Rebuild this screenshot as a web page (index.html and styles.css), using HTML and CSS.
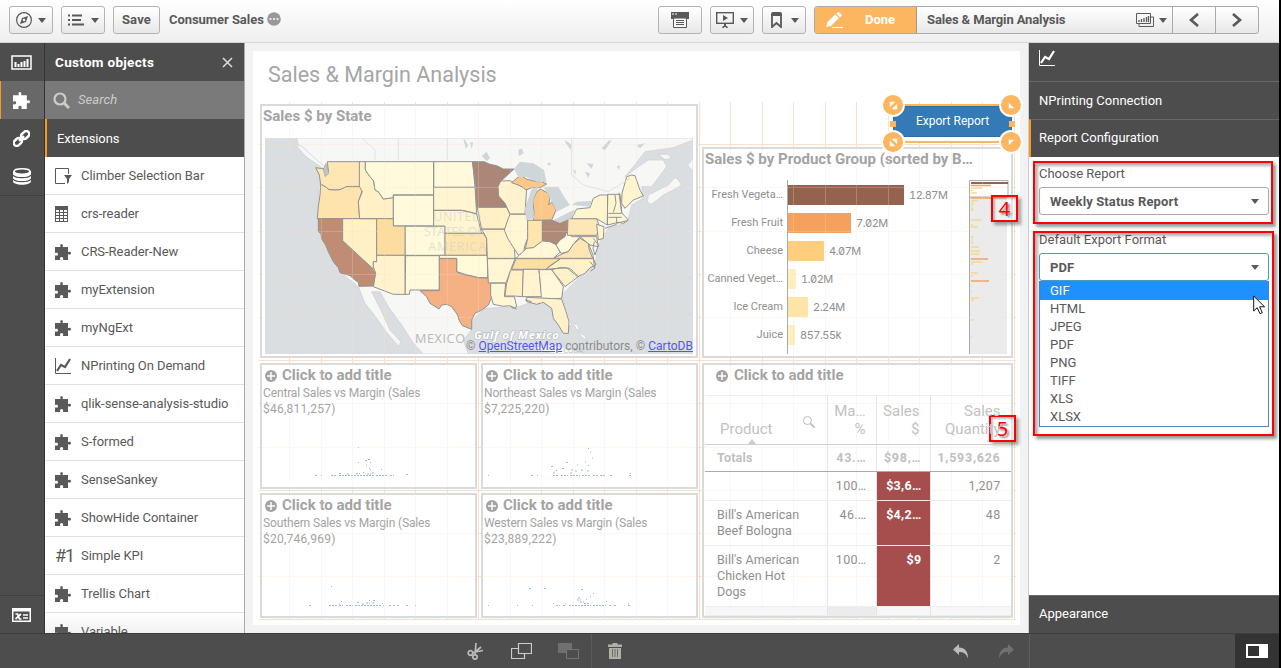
FILE: index.html
```html
<!DOCTYPE html>
<html lang="en">
<head>
<meta charset="utf-8">
<title>Consumer Sales</title>
<link rel="stylesheet" href="styles.css">
</head>
<body>
<svg class="defs" width="0" height="0" aria-hidden="true">
  <symbol id="puzzle" viewBox="0 0 16 16"><path d="M0 3h5c.8 0 .5-.6.3-1C5 1 5.500 0 6.500 0S8 1 7.800 2c-.2.400-.3 1 .4 1H13v4.500c0 .8.600.6 1 .4 1-.4 2 .2 2 1.300s-1 1.800-2 1.300c-.4-.2-1-.4-1 .4V16H8.500c-.8 0-.6-.6-.4-1 .4-1-.3-2-1.500-2s-1.900 1-1.500 2c.2.400.3 1-.5 1H0v-4c0-.8.600-.6 1-.4 1 .4 2-.2 2-1.400S2 8.300 1 8.800c-.4.200-1 .4-1-.4z"/></symbol>
  <symbol id="plus" viewBox="0 0 12 12"><circle cx="6" cy="6" r="6"/><path d="M6 2v8M2 6h8" stroke="#fff" stroke-width="1.500"/></symbol>
  <symbol id="line" viewBox="0 0 16 16"><path d="M.5 0v15.500H16" fill="none" stroke="currentColor"/><path d="M2 13l4-6 4 2 5-8" fill="none" stroke="currentColor" stroke-width="2.200"/></symbol>
</svg>
<header class="topbar">
  <button class="btn compass"><svg width="16" height="16" viewBox="0 0 16 16"><circle cx="8" cy="8" r="7.400" fill="none" stroke="#595959" stroke-width="1.200"/><path d="M12 4l-2 6-6 2 2-6z" fill="#595959"/><circle cx="8" cy="8" r="1.300" fill="#f5f5f5"/></svg><i class="caret"></i></button>
  <button class="btn"><svg width="17" height="12" viewBox="0 0 17 12"><path d="M0 1.500h2M0 6h2M0 10.500h2M4 1.500h10M4 6h9M4 10.500h12" stroke="#595959" stroke-width="2"/></svg><i class="caret"></i></button>
  <button class="btn save">Save</button>
  <span class="appname">Consumer Sales</span>
  <svg class="more" width="14" height="14" viewBox="0 0 14 14"><circle cx="7" cy="7" r="6.800" fill="#999"/><path d="M2.500 7h2M6 7h2M9.500 7h2" stroke="#fff" stroke-width="1.300"/></svg>
  <div class="spacer"></div>
  <button class="btn snap"><svg width="18" height="16" viewBox="0 0 18 16"><path d="M0 0h18v7H0z" fill="#595959"/><path d="M1 2h2M4 2h2" stroke="#fff"/><path d="M2.500 6v9.500h13V6z" fill="#f8f8f8" stroke="#595959"/><path d="M5 8.500h8M5 10.500h8M5 12.500h8" stroke="#595959"/></svg></button>
  <button class="btn"><svg width="18" height="16" viewBox="0 0 18 16"><rect x=".7" y=".7" width="16.600" height="10.600" fill="none" stroke="#595959" stroke-width="1.400"/><path d="M7 3l5 3-5 3zM6 16l1-2h1v-3h2v3h1l1 2h-2v-1H8v1z" fill="#595959"/></svg><i class="caret"></i></button>
  <button class="btn mark"><svg width="11" height="16" viewBox="0 0 11 16"><path d="M1 2v13l4.500-4 4.500 4V2" fill="none" stroke="#595959" stroke-width="1.800"/><path d="M0 4V2q0-2 2-2h7q2 0 2 2v2z" fill="#595959"/></svg><i class="caret"></i></button>
  <div class="sheetnav">
    <button class="done"><svg width="17" height="16" viewBox="0 0 17 16"><path d="M0 15l1.500-5L9 2.500 13 6l-8 8zM10 1.500Q11.500 0 13 0l3 3q0 1-2 2.300z" fill="#fff"/><path d="M6 15.500h11" stroke="#fff"/></svg><span>Done</span></button>
    <div class="sheetname"><span>Sales &amp; Margin Analysis</span><svg width="18" height="14" viewBox="0 0 18 14"><path d="M3 11v2.500h14.500V4H15M.5.5h14v10H.5z" fill="none" stroke="#595959"/><path d="M3 9V7M5.500 9V6M8 9V5M10.500 9V4M12.500 9V3" stroke="#595959" stroke-width="1.300"/></svg><i class="caret"></i></div>
    <button class="arrow"><svg width="10" height="14" viewBox="0 0 10 14"><path d="M9 1L2 7l7 6" fill="none" stroke="#595959" stroke-width="2.700"/></svg></button>
    <button class="arrow"><svg width="10" height="14" viewBox="0 0 10 14"><path d="M1 1l7 6-7 6" fill="none" stroke="#595959" stroke-width="2.700"/></svg></button>
  </div>
</header>
<main class="workspace">
  <nav class="rail">
    <div class="tab"><svg width="21" height="15" viewBox="0 0 21 15"><path d="M1 1h19v13H1z" fill="none" stroke="#fff" stroke-width="1.500"/><path d="M4.500 12V7M7.500 12V9M10.500 12V7M13.500 12V6M16.500 12V4" stroke="#fff" stroke-width="2"/></svg></div>
    <div class="tab active"><svg width="17" height="17" fill="#fff"><use href="#puzzle"/></svg></div>
    <div class="tab"><svg width="17" height="17" viewBox="0 0 17 17"><g transform="rotate(-43 8.500 8.500)" fill="none" stroke="#fff" stroke-width="2.500"><rect x="-1" y="5.500" width="9" height="6" rx="3"/><rect x="9" y="5.500" width="9" height="6" rx="3"/><path d="M5 8.500h7"/></g></svg></div>
    <div class="tab"><svg width="18" height="17" viewBox="0 0 18 17"><path d="M0 3v10c0 5 18 5 18 0V3" fill="#fff"/><ellipse cx="9" cy="3.500" rx="8" ry="2.700" fill="#4d4d4d" stroke="#fff" stroke-width="1.500"/><path d="M0 7c2 3.500 16 3.500 18 0M0 11c2 3.500 16 3.500 18 0" fill="none" stroke="#4d4d4d" stroke-width="1.300"/></svg></div>
    <div class="tab vars"><svg width="19" height="14" viewBox="0 0 19 14"><path d="M0 0h19v14H0z" fill="#fff"/><path d="M1.500 3.500h16v9h-16z" fill="#4d4d4d"/><path d="M11 7h5M11 10h5" stroke="#fff" stroke-width="1.500"/><path d="M3.500 6h2l2 5h2M9 6L3.500 11" stroke="#fff" stroke-width="1.700" fill="none"/></svg></div>
  </nav>
  <aside class="objects">
    <div class="objhead"><b>Custom objects</b><svg width="11" height="11" viewBox="0 0 11 11"><path d="M1 1l9 9M10 1l-9 9" stroke="#ddd" stroke-width="1.500"/></svg></div>
    <div class="search"><svg width="17" height="17" viewBox="0 0 17 17"><circle cx="7" cy="7" r="5.500" fill="none" stroke="#ccc" stroke-width="2.200"/><path d="M11 11l5 5" stroke="#ccc" stroke-width="3"/></svg><i>Search</i></div>
    <div class="exthead">Extensions</div>
    <ul class="extlist">
      <li><svg width="17" height="16" viewBox="0 0 17 16"><path d="M10 15.500H.5V.5h13V6" fill="none" stroke="#595959"/><path d="M9 7h8l-3 4v3l-2 2v-5z" fill="#595959"/></svg>Climber Selection Bar</li>
      <li><svg width="17" height="16" viewBox="0 0 17 16"><path d="M0 0h13v16H0z" fill="#595959"/><path d="M1 5H4M5 5h3M9 5h3M1 8H4M5 8h3M9 8h3M1 11H4M5 11h3M9 11h3M1 14H4M5 14h3M9 14h3" stroke="#fff" stroke-width="2"/></svg>crs-reader</li>
      <li><svg class="pz"><use href="#puzzle"/></svg>CRS-Reader-New</li>
      <li><svg class="pz"><use href="#puzzle"/></svg>myExtension</li>
      <li><svg class="pz"><use href="#puzzle"/></svg>myNgExt</li>
      <li><svg class="pz"><use href="#line"/></svg>NPrinting On Demand</li>
      <li><svg class="pz"><use href="#puzzle"/></svg>qlik-sense-analysis-studio</li>
      <li><svg class="pz"><use href="#puzzle"/></svg>S-formed</li>
      <li><svg class="pz"><use href="#puzzle"/></svg>SenseSankey</li>
      <li><svg class="pz"><use href="#puzzle"/></svg>ShowHide Container</li>
      <li><span class="kpi">#1</span>Simple KPI</li>
      <li><svg class="pz"><use href="#puzzle"/></svg>Trellis Chart</li>
      <li><svg class="pz"><use href="#puzzle"/></svg>Variable</li>
    </ul>
  </aside>
  <section class="stage">
    <div class="sheet">
      <h1>Sales &amp; Margin Analysis</h1>
      <div class="board">
        <article class="widget mapw">
          <h2>Sales $ by State</h2>
          <div class="mapbox">
          <svg class="map" width="428" height="216" viewBox="30 129 1284 648">
            <rect x="30" y="129" width="1284" height="648" fill="#dadee1"/>
            <path class="land" d="M125 129L130 150 150 163 183 200 205 225 192 275 187 365 193 410 230 490 260 535 310 575 330 625 362 665 393 710 432 755 437 740 405 705 380 650 350 590 375 590 400 635 440 690 475 745 505 777H640L625 735 650 705 652 675 690 640 790 635 850 615 905 635 925 700 950 690 920 600 970 550 1020 510 1030 450 1060 400 1110 385 1120 370 1130 330 1165 310 1160 275 1190 275 1235 215 1225 195 1180 195 1150 215 1110 245 1135 215 1170 170 1255 158 1314 135V129z"/>
            <path class="land" d="M1180 300L1210 285 1240 270 1260 248 1268 252 1280 270 1255 285 1225 300 1190 328 1177 322zM1210 178l30 0 10 12-20 4zM1298 210l16-20v40zM120 148l20 6 50 45 24 18-6 6-55-38z"/>
            <path class="land" d="M955 685l12 4 6 14-8 2zM972 710l20 15 2 10-14-8zM830 760l50-12 60 12 50 17H900z"/>
            <g class="states">
              <path fill="#ffe7b5" d="M217 200H315V274L275 275 255 284 240 285 222 284 215 278 205 272 197 268 193 240 182 218 207 222 212 240 220 228z"/>
              <path fill="#fee3ad" d="M197 268L205 272 215 278 222 284 240 285 255 284 275 275H315L322 285 310 320 314 371H187L190 335 195 300z"/>
              <path fill="#c08c74" d="M190 371H263V437L360 530 362 540 357 573 312 574 310 562 300 555 285 542 255 533 250 518 235 500 220 470 212 450 200 432 198 415 190 410z"/>
              <path fill="#fff0c6" d="M263 371H365V500L355 500V522L263 437zM313 200H331V225L345 245 356 258 360 285 370 290 385 312 415 308V371H314L310 320 322 290 313 274z"/>
              <path fill="#fffadb" d="M331 200H536V300H415V308L385 312 370 290 360 285 356 258 345 245 331 225zM536 200H653L660 277H536zM415 300H536V393H415zM450 393H570V481H450zM452 482H553V585H465L463 598H450z"/>
              <path fill="#fff6d1" d="M536 277H660L665 357 640 350 620 346H536zM536 346H620L640 350 665 357 680 415H570V393H536z"/>
              <path fill="#fddc9f" d="M365 371H415V393H450V481H365z"/>
              <path fill="#fff2cc" d="M365 481H450V598H415L355 575 362 535 355 515V500H365z"/>
              <path fill="#fee5b0" d="M570 415H685L695 430V481H570z"/>
              <path fill="#fffad7" d="M553 481H697L698 548 670 548 645 542 605 530V490H553z"/>
              <path fill="#f5b184" d="M553 491H605V530L620 538 645 542 670 548 706 550 713 600 700 630 690 638 675 648 660 655 650 675 650 703 622 692 612 675 608 660 590 635 575 628 560 630 552 642 525 625 515 605 495 587H553z"/>
            </g>
            <g class="states" transform="translate(645 0)">
              <path fill="#ac8777" d="M7 200H42L60 208 80 212 100 222 132 222 102 250 92 258 84 275 88 300 109 325 110 337H20L17 270z"/>
              <path fill="#fff0c6" d="M22 337H110L125 370 115 385 105 402H35L30 380z"/>
              <path fill="#fff2ce" d="M92 258L120 257 145 270 170 280 165 357H120L105 325 86 303 84 275z"/>
              <path fill="#fbc889" d="M125 263L140 250 155 240 168 252 200 260 215 260 230 267 210 278 185 278 168 285 160 278 145 270zM190 376L192 350 188 318 200 290 212 282 235 295 240 310 236 330 246 320 258 345 245 375z"/>
              <path fill="#fff1c8" d="M35 403H105L115 430 133 455 135 490H52L50 430z"/>
              <path fill="#fff7d3" d="M115 370L120 358H168L173 376V430L165 450 160 475 145 480 135 465 113 430 103 405zM52 491H135L122 525 108 564H55zM62 564H107L103 605H133L140 635 130 640 118 632 100 634 70 628 62 600z"/>
              <path fill="#fee5ae" d="M173 376H217V440L190 458 166 462 173 430z"/>
              <path fill="#b08a79" d="M217 376H245L270 380 292 372V405L285 425 270 435 260 450 240 440 217 437z"/>
              <path fill="#fff7d6" d="M140 488L150 478 170 460 190 458 217 438 240 440 260 450 270 472 250 490H135z"/>
              <path fill="#fddfa1" d="M138 491H272L240 512 227 523H125z"/>
              <path fill="#fff0c6" d="M122 525H160L157 605 133 603H105L110 565z"/>
              <path fill="#fff4cf" d="M160 523H207L215 605H157z"/>
              <path fill="#fff9d9" d="M207 524H245L280 575 275 610 215 612z"/>
              <path fill="#fff1ca" d="M245 524L270 518 300 520 325 545 305 560 285 575zM272 491H370L378 510 360 518 345 535 323 545 290 518 227 523zM170 607L275 612 288 650 297 680 295 715 280 715 265 690 250 670 245 640 220 622 200 628 170 620z"/>
              <path fill="#fff9dd" d="M258 450L270 435 285 425 292 405 305 425 330 425 310 448 295 470 273 475z"/>
              <path fill="#fee5b4" d="M250 490L285 473 295 470 310 448 330 430 355 445 358 465 368 490z"/>
              <path fill="#fee7b6" d="M294 371H380L390 400 380 421H292z"/>
              <path fill="#fff6d0" d="M305 371L320 342 360 338 370 310 390 300H413L412 390 380 371zM380 388L402 395 400 430 385 435zM413 298H450L455 353 475 375 460 385 445 382 412 390zM455 325L456 295 470 245 485 240 495 242 510 285 520 303 490 315 465 340zM330 425H380L385 455 360 450z"/>
              <path fill="none" d="M415 355H455M415 367H455M435 300L438 325 430 352M447 293L455 353M440 367V385"/>
              <path fill="none" d="M357 450l12 30 5 40-12 8M370 430l15 20-10 30-6-20 4-20M440 385l30-8M405 400l35-12M360 500l15 18M120 632l20 10M165 615l20 5"/>
            </g>
            <g fill="#cfd6d9" transform="translate(645 0)">
              <path d="M132 222L150 200 190 205 222 225 230 262 200 260 165 245 145 247zM168 375L165 340 185 282 205 275 188 320 192 370zM220 275L265 275 285 310 300 330 260 350 248 325 235 300zM250 376L300 350 320 342 305 368 270 384zM305 330L320 320 365 318 360 335z"/>
              <path d="M35 183l15-13 10 20-10 8zM145 165l10-5 6 15-15 8zM285 135l20 15-3 14-15-20zM350 205l20 2-5 15zM345 230l15 5-5 14zM395 160l20-22 10-2-20 30zM230 205l12-2-3 10zM310 225l8 2-2 14zM-20 130l15 20-8 12zM0 140l9 4-4 18zM500 150l25-5-15 15zM440 215l10-5-2 14z"/>
            </g>
            <path d="M205 222L213 205 222 235 210 245z" fill="#bfc6c9" stroke="#777"/>
            <path d="M320 129L360 165V196M430 129V196M577 129V196M950 129V240L985 270 1060 290M1060 290L1125 250" fill="none" stroke="#e2e2e2" stroke-width="3"/>
            <g fill="#c7cccd" class="country" font-size="37"><text x="535" y="377" textLength="143">UNITED</text><text x="507" y="423" textLength="178">STATES OF</text><text x="520" y="467" textLength="173">AMERICA</text></g>
            <g class="places"><text x="480" y="743" font-size="38" textLength="150" fill="#b4b8ba">MEXICO</text><text x="657" y="733" class="gulf" textLength="255">Gulf of Mexico</text><text x="925" y="775" font-size="22" fill="#bbb">CUBA</text></g>
          </svg>
          <div class="credit">© <u>OpenStreetMap</u> contributors, © <u>CartoDB</u></div>
          </div>
        </article>
        <div class="rightcol">
          <div class="exportslot"><div class="selected"><button class="export">Export Report</button>
            <span class="handle tl"><svg viewBox="0 0 12 12"><path d="M2 2h6L2 8zM10 4v6H4z"/></svg></span><span class="handle tr"><svg viewBox="0 0 12 12"><path d="M3 3v6h6z"/></svg></span><span class="handle bl"><svg viewBox="0 0 12 12"><path d="M4 2h6v6zM2 4v6h6z"/></svg></span><span class="handle br"><svg viewBox="0 0 12 12"><path d="M3 3h6L3 9z"/></svg></span><i class="knob l"></i><i class="knob r"></i></div></div>
          <article class="widget barw">
            <h2>Sales $ by Product Group (sorted by B…</h2>
            <div class="bars">
              <div class="barrows">
                <div class="bar"><span>Fresh Vegeta…</span><i style="width:116px;background:#94634f"></i><b>12.87M</b></div>
                <div class="bar"><span>Fresh Fruit</span><i style="width:63px;background:#f4a15d"></i><b>7.02M</b></div>
                <div class="bar"><span>Cheese</span><i style="width:36px;background:#fecd7d"></i><b>4.07M</b></div>
                <div class="bar"><span>Canned Veget…</span><i style="width:8px;background:#fff0bd"></i><b>1.02M</b></div>
                <div class="bar"><span>Ice Cream</span><i style="width:20px;background:#fee5a5"></i><b>2.24M</b></div>
                <div class="bar"><span>Juice</span><i style="width:7px;background:#ffefbf"></i><b>857.55k</b></div>
              </div>
              <svg class="mini" width="40" height="174" viewBox="0 0 40 174"><path d="M0 17h38v157H0z" fill="#ebebeb"/><path d="M.5 174V.5h38.500V17H1" fill="none" stroke="#aaa"/><path d="M2 3h37" stroke="#94634f" stroke-width="2"/><path d="M2 5.500h20M2 18h35M2 79h17M2 101h18" stroke="#efa468" stroke-width="1.500"/><path d="M2 8h11M2 10.500h2M2 13h6M2 20.500h7M2 23h3M2 25h2M2 28h2M2 30h3M2 40h10M2 45h2M2 47h7M2 57h3M2 60h2M2 63h2M2 67h8M2 71h9M2 74h8M2 82h11M2 84h2M2 93h7M2 96h2M2 106h1M2 111h1M2 118h8M2 120h3M2 140h3M2 157h1" stroke="#f4d88e" stroke-width="1.500"/></svg>
            </div>
          </article>
        </div>
        <article class="widget sc"><h2><svg class="plus"><use href="#plus"/></svg>Click to add title</h2><p>Central Sales vs Margin (Sales<br><span>$46,811,257)</span></p><svg class="dots" viewBox="260 440 213 45"><path d="M313 473.500h3M319 473.500h1M329 473.500h6M337 473.500h35M374 473.500h12M388 473.500h4M337 471.500h3M345 472h2M354 471.500h4M361 470.500h1M365 472h4M370 471h2M356 460.500h1M356 445.500h1M363 458.500h2M366 457.500h2M368 460.500h1M364 463h1M367 466.500h1M368 468h1M379 467.500h1M404 472.500h2"/></svg></article>
        <article class="widget sc"><h2><svg class="plus"><use href="#plus"/></svg>Click to add title</h2><p>Northeast Sales vs Margin (Sales<br><span>$7,225,220)</span></p><svg class="dots" viewBox="481 440 213 45"><path d="M486 473.500h1M529 473.500h2M535 473.500h1M551 473.500h6M559 473.500h7M568 473.500h10M580 473.500h8M591 473.500h5M598 473.500h5M608 473.500h3M627 473.500h2M628 471.500h1M549 464.500h2M554 468.500h1M560 466.500h3M564 460.500h2M569 468h3M573 469h2M575 463h1M579 468h2M583 460h1M586 463.500h1M590 456h1M588 450h1M586 446.500h1M585 469h2M551 471h2M568 471h2"/></svg></article>
        <article class="widget tablew"><h2><svg class="plus"><use href="#plus"/></svg>Click to add title</h2>
          <table>
            <colgroup><col class="c1"><col class="c2"><col class="c3"><col class="c4"></colgroup>
            <tr class="th"><th>Product<svg class="lens" width="12" height="12" viewBox="0 0 12 12"><circle cx="4.500" cy="4.500" r="4" fill="none" stroke="#bbb"/><path d="M7.500 7.500L12 12" stroke="#bbb" stroke-width="1.700"/></svg><i class="sort"></i></th><th>Ma…<br>%</th><th>Sales<br>$</th><th>Sales<br>Quantity</th></tr>
            <tr class="totals"><td>Totals</td><td>43.…</td><td>$98,…</td><td>1,593,626</td></tr>
            <tr class="r1"><td></td><td>100…</td><td>$3,6…</td><td>1,207</td></tr>
            <tr class="r2"><td>Bill's American<br>Beef Bologna</td><td>46.…</td><td>$4,2…</td><td>48</td></tr>
            <tr class="r3"><td>Bill's American<br>Chicken Hot<br>Dogs</td><td>100…</td><td>$9</td><td>2</td></tr>
            <tr class="r4"><td></td><td></td><td></td><td></td></tr>
          </table>
        </article>
        <article class="widget sc"><h2><svg class="plus"><use href="#plus"/></svg>Click to add title</h2><p>Southern Sales vs Margin (Sales<br><span>$20,746,969)</span></p><svg class="dots" viewBox="260 570 213 45"><path d="M307 603.500h3M327 603.500h8M337 603.500h4M344 603.500h7M353 603.500h26M381 603.500h1M387 603.500h3M391 603.500h2M395 603.500h2M404 603.500h2M413 603.500h1M329 584.500h1M339 599.500h1M337 602h1M355 600.500h2M360 602h2M364 601h4M367 598.500h1M371 598.500h2M370 601h2M380 601.500h1"/></svg></article>
        <article class="widget sc"><h2><svg class="plus"><use href="#plus"/></svg>Click to add title</h2><p>Western Sales vs Margin (Sales<br><span>$23,889,222)</span></p><svg class="dots" viewBox="481 570 213 45"><path d="M486 603.500h1M515 603.500h1M530 603.500h1M554 603.500h4M561 603.500h3M567 603.500h22M591 603.500h8M600 603.500h4M607 603.500h2M612 603.500h2M626 603.500h2M551 601.500h1M527 586.500h2M542 586.500h2M579 587.500h2M591 591.500h1M588 594.500h1M576 596h2M575 598h4M584 597h1M578 600h4M582 601.500h6M604 599.500h1M626 602h1M563 602h1"/></svg></article>
      </div>
    </div>
  </section>
  <aside class="props">
    <div class="phead"><svg class="pz"><use href="#line"/></svg></div>
    <div class="phead">NPrinting Connection</div>
    <div class="phead open">Report Configuration</div>
    <div class="pbody">
      <label>Choose Report</label>
      <div class="select">Weekly Status Report<i class="caret"></i></div>
      <label class="second">Default Export Format</label>
      <div class="select focus">PDF<i class="caret"></i></div>
      <ul class="options"><li class="hot">GIF</li><li>HTML</li><li>JPEG</li><li>PDF</li><li>PNG</li><li>TIFF</li><li>XLS</li><li>XLSX</li></ul>
    </div>
    <div class="phead appearance">Appearance</div>
  </aside>
</main>
<footer class="bottombar">
  <div class="tools">
    <svg width="17" height="17" viewBox="0 0 17 17"><g fill="none" stroke="#bbb" stroke-width="1.700"><circle cx="3.500" cy="10" r="2.300"/><circle cx="8" cy="14" r="2.200"/><path d="M5.500 9.500L16 7.500M8 12L9 0M8 9l6-5"/></g></svg>
    <svg width="21" height="16" viewBox="0 0 21 16"><path d="M7.500.5h13v10h-13zM7.500 5.500h-7v10h13v-5" fill="none" stroke="#ccc" stroke-width="1.200"/></svg>
    <svg width="21" height="16" viewBox="0 0 21 16"><path d="M0 0h14v10H0z" fill="#707070"/><path d="M8.500 6.500h12v9h-12z" fill="#4d4d4d" stroke="#757575"/></svg>
    <i class="divider"></i>
    <svg width="14" height="16" viewBox="0 0 14 16"><path d="M0 1.500h4L5 0h4l1 1.500h4V4H0zM1 5h12v11H1z" fill="#b0b0a8"/><path d="M4.500 6v8M7 6v8M9.500 6v8" stroke="#6c6c66"/></svg>
  </div>
  <div class="history">
    <svg width="16" height="15" viewBox="0 0 16 15"><path d="M0 5.500L6 0v3.500c6 0 9 4 9 11C13 9 10 8 6 8v3z" fill="#bbb"/></svg>
    <svg width="16" height="15" viewBox="0 0 16 15"><path d="M16 5.500L10 0v3.500c-6 0-9 4-9 11C3 9 6 8 10 8v3z" fill="#707070"/></svg>
  </div>
  <div class="toggle"><span><svg width="22" height="14" viewBox="0 0 22 14"><path d="M0 0h22v14H0z" fill="#fff"/><path d="M2 2h11v10H2z" fill="#333"/></svg></span></div>
</footer>
<div class="edge"></div>
<div class="callout first"></div>
<div class="callout second"></div>
<div class="num four">4</div>
<div class="num five">5</div>
<svg class="pointer" width="13" height="20" viewBox="0 0 13 20"><path d="M.7 1v15l3.500-3.300 2.800 6 2.300-1-2.700-5.900h5z" fill="#fff" stroke="#111"/></svg>
</body>
</html>
```
FILE: styles.css
```css
* { box-sizing: border-box; }
body { margin: 0; width: 1281px; height: 668px; overflow: hidden; position: relative; font: 13px/16px Roboto, "Liberation Sans", sans-serif; color: #595959; background: #f2f2f2; }
.defs { position: absolute; }
h1, h2, p, ul { margin: 0; padding: 0; }
ul { list-style: none; }
svg { display: block; flex: none; }
button { font: inherit; color: inherit; margin: 0; padding: 0; border: 0; background: none; }

.topbar { height: 43px; width: 1279px; display: flex; align-items: flex-start; padding: 6px 20px 0 9px; background: linear-gradient(#fff, #efefef); border-bottom: 1px solid #d6d6d6; }
.btn { height: 28px; width: 44px; margin-right: 8px; display: flex; align-items: center; justify-content: center; gap: 6px; border: 1px solid #b3b3b3; border-radius: 3px; background: linear-gradient(#fff, #e8e8e8); }
.btn.mark { gap: 9px; padding-left: 2px; }
.save { width: 47px; font-weight: 700; font-size: 13px; letter-spacing: .2px; }
.caret { width: 0; height: 0; border: 4px solid transparent; border-top: 5px solid #595959; border-bottom: 0; flex: none; }
.appname { font-weight: 700; line-height: 27px; margin-left: 1px; letter-spacing: -.05px; }
.more { margin: 6px 0 0 3px; }
.spacer { flex: 1; }
.sheetnav { display: flex; width: 445px; height: 28px; border: 1px solid #aaa; border-radius: 3px; background: linear-gradient(#fff, #e8e8e8); overflow: hidden; }
.done { width: 102px; background: #fbb65f; border-right: 1px solid #999; display: flex; align-items: center; padding-left: 11px; gap: 22px; color: #fff; font-weight: 700; }
.sheetname { flex: 1; display: flex; align-items: center; padding: 0 5px 0 10px; gap: 5px; font-weight: 700; letter-spacing: -.12px; }
.sheetname span { flex: 1; white-space: nowrap; }
.arrow { width: 43px; border-left: 1px solid #aaa; display: flex; align-items: center; justify-content: center; }

.workspace { display: flex; height: 590px; width: 1279px; }
.rail { width: 45px; background: #4d4d4d; border-right: 1px solid #333; display: flex; flex-direction: column; }
.tab { height: 38px; display: flex; align-items: center; justify-content: center; padding-right: 1px; }
.tab.active { background: #686868; border-left: 1px solid #f8981d; padding-right: 2px; }
.tab:nth-child(4) { border-bottom: 1px solid #404040; height: 39px; }
.tab.vars { margin-top: auto; border-top: 1px solid #404040; }
.objects { width: 200px; background: #fff; border-right: 1px solid #ababab; overflow: hidden; }
.objhead { height: 38px; background: #4d4d4d; color: #fff; display: flex; align-items: center; justify-content: space-between; padding: 0 12px 0 10px; font-size: 13.500px; letter-spacing: .3px; margin-right: -1px; }
.search { height: 38px; background: #7a7a7a; color: #ccc; display: flex; align-items: center; gap: 8px; padding-left: 8px; letter-spacing: .1px; }
.exthead { height: 38px; line-height: 39px; background: #4d4d4d; color: #fff; border-left: 2px solid #f8981d; padding-left: 10px; margin-right: -1px; letter-spacing: -.1px; }
.extlist li { height: 38px; border-bottom: 1px solid #e0e0e0; display: flex; align-items: center; gap: 9px; padding-left: 10px; white-space: nowrap; letter-spacing: -.05px; }
.extlist li:last-child { background: linear-gradient(#fff, #f0f0f0 60%); }
.pz { width: 16px; height: 16px; fill: #595959; margin: 1px 1px 0 0; }
.kpi { font-size: 18px; width: 17px; letter-spacing: -1px; }

.stage { width: 784px; background: #f2f2f2; padding: 8px; border-right: 1px solid #ccc; }
.sheet { background: #fff; width: 767px; height: 574px; position: relative; }
h1 { height: 53px; padding: 12px 0 0 15px; font-size: 21.5px; line-height: 24px; font-weight: 400; color: #a6a6a6; }
.board { padding-left: 7px; display: grid; grid-template-columns: 217px 217px 311px; grid-template-rows: 254px 126px 125px; column-gap: 4px; row-gap: 4.5px; position: relative; }
.board::before, .board::after { content: ""; position: absolute; left: 6px; top: -2px; width: 757px; height: 518px; background: repeating-linear-gradient(90deg, transparent 0 30.5px, #fcdfc8 30.5px 31.5px), repeating-linear-gradient(transparent 0 42.2px, #fcdfc8 42.2px 43.2px); pointer-events: none; }
.board::after { opacity: .25; }
.widget { border: 2px solid #d9dada; background: #fff; position: relative; overflow: hidden; color: #9b9b9b; }
h2 { font-size: 15px; line-height: 18px; height: 18px; font-weight: 700; color: #a3a3a3; padding-left: 1px; display: flex; align-items: center; white-space: nowrap; margin-top: 1px; letter-spacing: .02px; }
.mapw { grid-column: span 2; }
.mapbox { position: relative; margin: 13px 0 0 3px; width: 428px; }
.land { fill: #f7f7f6; stroke: #c8ced1; stroke-width: 2; }
.states path { stroke: #929292; stroke-width: 3; stroke-linejoin: round; }
.country { opacity: .5; font-family: "Open Sans", sans-serif; }
.places { font-family: "Open Sans", sans-serif; }
.gulf { font: italic 700 34px "Open Sans", sans-serif; fill: #fff; stroke: #b8bec2; stroke-width: 4; paint-order: stroke; }
.credit { position: absolute; right: 0; bottom: 0; font-size: 12px; line-height: 16px; color: #8b8b8b; white-space: nowrap; letter-spacing: .02px; }
.credit u { color: #5555e8; }
.rightcol { display: flex; flex-direction: column; }
.exportslot { height: 43px; display: flex; padding: 0 0 0 191px; }
.selected { width: 119px; height: 39px; border-top: 2px solid #fbb65f; border-bottom: 2px solid #fbb65f; background: #fff; position: relative; z-index: 2; padding: 0 0 4px; }
.export { width: 119px; height: 31px; background: #337ab7; color: #fff; font-size: 12px; display: block; border: 1px solid #2e6da4; padding-bottom: 1px; }
.handle { position: absolute; width: 24px; height: 24px; border-radius: 12px; border: 2px solid #fff; background: #fbb65f; display: flex; align-items: center; justify-content: center; }
.handle svg { width: 11px; fill: #fff; }
.tl { left: -12px; top: -13px; }
.tr { right: -11px; top: -13px; }
.bl { left: -12px; bottom: -13px; }
.br { right: -11px; bottom: -13px; }
.knob { position: absolute; width: 6px; height: 6px; background: #fbb65f; top: 15px; }
.knob.l { left: -3px; }
.knob.r { right: -3px; }
.barw { flex: 1; }
.bars { display: flex; padding-top: 12px; }
.barrows { width: 265px; height: 174px; padding-top: 5px; background: linear-gradient(90deg, transparent 83px, #aaa 83px 84px, transparent 84px); }
.bar { height: 20px; margin-bottom: 8px; display: flex; align-items: center; font-size: 11px; color: #8e8e8e; }
.bar span { width: 79px; text-align: right; margin-right: 5px; white-space: nowrap; flex: none; }
.bar i { height: 20px; }
.bar b { margin-left: 5px; font: 11px Inter, sans-serif; letter-spacing: -.5px; font-feature-settings: "zero", "tnum"; }
.plus { width: 12px; height: 12px; fill: #a3a3a3; margin: 2px 5px 0 2px; }
.sc p { padding-left: 1px; font-size: 12px; line-height: 16px; color: #a3a3a3; margin-top: 1px; letter-spacing: -.14px; }
.sc p span { letter-spacing: .25px; }
.dots { width: 213px; height: 45px; margin-top: 25px; }
.dots path { stroke: #9fb8d8; stroke-width: 1.200; stroke-dasharray: 2 1; }
.tablew { grid-row: span 2; grid-column: 3; }
.tablew h2 { padding-left: 10px; }
.tablew .plus { margin-right: 6px; }
table { border-collapse: collapse; table-layout: fixed; width: 306px; margin: 11px 0 0 1px; color: #999; font-size: 12.5px; line-height: 16px; border-top: 1px solid #eee; position: relative; z-index: 1; }
.c1 { width: 122px; } .c2 { width: 49px; } .c3 { width: 54px; } .c4 { width: 81px; }
td, th { padding: 6px 10px 0 0; text-align: right; vertical-align: top; border-right: 1px solid #e5e5e5; border-bottom: 1px solid #eee; font-weight: 400; white-space: nowrap; }
td { padding-top: 5px; letter-spacing: .3px; }
td:first-child { text-align: left; padding: 6px 0 0 12px; letter-spacing: .05px; }
.th { height: 49px; font-size: 15px; line-height: 18px; color: #c2c2c2; }
.th th { border-bottom-color: #d0d0d0; }
.th th:first-child { text-align: left; vertical-align: bottom; padding: 0 0 6px 15px; position: relative; }
.lens { position: absolute; left: 98px; top: 20px; }
.sort { position: absolute; left: 43px; bottom: 0; border: 4px solid transparent; border-bottom: 5px solid #ccc; border-top: 0; }
.totals { height: 27px; }
.totals td { font-weight: 700; color: #c0c0c0; border-bottom-color: #aaa; letter-spacing: .75px; }
.totals td:first-child { padding-top: 5px; letter-spacing: .2px; }
.totals td:nth-child(2), .r1 td:nth-child(2), .r2 td:nth-child(2), .r3 td:nth-child(2) { padding-right: 9px; }
.r1 { height: 29px; } .r2 { height: 45px; } .r3 { height: 61px; } .r4 { height: 9px; }
.r1 td, .r2 td, .r3 td { color: #8f8f8f; padding-top: 6px; }
.r1 td:nth-child(3), .r2 td:nth-child(3), .r3 td:nth-child(3) { background: #a64d4d; color: #fff; font-weight: 700; }
.totals td:nth-child(3), .r1 td:nth-child(3), .r2 td:nth-child(3), .r3 td:nth-child(3) { padding-right: 8px; }
.r4 td { padding: 0; background: #f7f7f7; }
.r4 td:nth-child(2) { background: #ececec; }

.props { width: 250px; background: #fff; display: flex; flex-direction: column; }
.phead { height: 38px; line-height: 37px; background: #4d4d4d; color: #fff; padding-left: 10px; border-top: 1px solid #686868; flex: none; }
.phead:first-child { border-top: 0; }
.phead .pz { color: #fff; margin-top: 7px; fill: none; }
.phead.open { border-left: 2px solid #f8981d; padding-left: 8px; line-height: 36px; }
.pbody { flex: 1; padding: 9px 10px 0; }
label { display: block; height: 21px; }
label.second { margin-top: 17px; }
.select { height: 28px; border: 1px solid #aaa; border-radius: 3px; display: flex; align-items: center; justify-content: space-between; padding: 1px 9px 0 10px; font-weight: 700; letter-spacing: .12px; }
.select.focus { border-color: #469bc8; }
.options { border: 1px solid #5580c8; height: 146px; }
.options li { height: 18px; line-height: 18px; padding-left: 10px; }
.options .hot { background: #1e90ff; color: #fff; }
.appearance { line-height: 35px; }

.bottombar { height: 35px; width: 1279px; background: #4d4d4d; border-top: 1px solid #3c3c3c; display: flex; align-items: center; }
.tools { flex: 1; display: flex; align-items: center; padding-left: 467px; gap: 26px; height: 34px; }
.tools svg:nth-child(1) { margin-right: 1px; }
.divider { width: 1px; height: 34px; background: #5c5c5c; margin: 0 -10px 0 -14px; }
.history { display: flex; gap: 29px; margin-right: 15px; }
.toggle { width: 250px; height: 34px; border-left: 1px solid #5c5c5c; display: flex; justify-content: flex-end; }
.toggle span { width: 44px; background: #333; display: flex; align-items: center; justify-content: center; }
.edge { position: absolute; right: 0; top: 0; width: 2px; height: 668px; background: #000; }
.callout { position: absolute; border: 2px solid #f00; box-shadow: 3px 3px 3px rgba(0,0,0,.4), inset 3px 3px 3px rgba(0,0,0,.3); }
.callout.first { left: 1033px; top: 161px; width: 240px; height: 63px; }
.callout.second { left: 1033px; top: 231px; width: 241px; height: 205px; }
.num { position: absolute; width: 27px; height: 27px; border: 2px solid #f00; color: #f00; font: 20px/23px "Noto Sans", sans-serif; text-align: center; text-shadow: 2px 2px 2px #888; background: rgba(255,255,255,.3); box-shadow: 3px 3px 3px rgba(0,0,0,.35), inset 2px 2px 2px rgba(0,0,0,.25); }
.four { left: 991px; top: 195px; }
.five { left: 989px; top: 415px; }
.pointer { position: absolute; left: 1253px; top: 295px; }
```
